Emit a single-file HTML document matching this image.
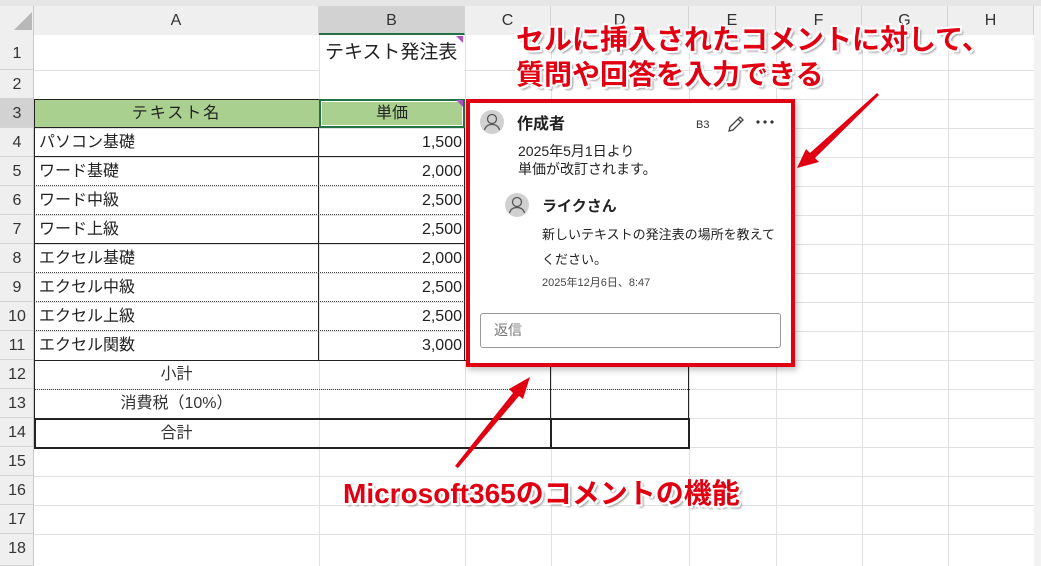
<!DOCTYPE html><html><head><meta charset="utf-8"><style>
body{margin:0;width:1041px;height:566px;overflow:hidden;background:#fff;font-family:"Liberation Sans","Noto Sans CJK JP",sans-serif;position:relative}
.a{position:absolute}
.hl{position:absolute;height:1px;background:#e1e1e1}
.vl{position:absolute;width:1px;background:#e1e1e1}
.ch{position:absolute;top:6px;height:29px;line-height:29px;text-align:center;font-size:16px;color:#333;background:#efefef;border-right:1px solid #d4d4d4;box-sizing:border-box}
.rh{position:absolute;left:0;width:34px;text-align:center;font-size:16px;color:#333;background:#efefef;border-bottom:1px solid #d4d4d4;box-sizing:border-box}
.c{position:absolute;font-size:16px;color:#222;white-space:nowrap;line-height:29px;height:29px}
.red{position:absolute;color:#e00012;font-weight:bold;font-size:28px;line-height:32px;white-space:nowrap;text-shadow:2px 2px 0 #fff,-2px -2px 0 #fff,2px -2px 0 #fff,-2px 2px 0 #fff,3px 3px 2px #999}
</style></head><body>
<div class="a" style="left:0;top:0;width:1041px;height:6px;background:#e6e6e6"></div>
<div class="a" style="left:0;top:6px;width:34px;height:29px;background:#efefef;border-right:1px solid #d4d4d4;box-sizing:border-box"></div>
<svg class="a" style="left:14px;top:12px" width="18" height="20"><polygon points="18,0 18,18 0,18" fill="#b8b8b8"/></svg>
<div class="ch" style="left:34px;width:285px">A</div>
<div class="ch" style="left:319px;width:146px;background:#d2d2d2;border-bottom:2px solid #217346">B</div>
<div class="ch" style="left:465px;width:86px">C</div>
<div class="ch" style="left:551px;width:138px">D</div>
<div class="ch" style="left:689px;width:87px">E</div>
<div class="ch" style="left:776px;width:86px">F</div>
<div class="ch" style="left:862px;width:86px">G</div>
<div class="ch" style="left:948px;width:86px">H</div>
<div class="a" style="left:1034px;top:6px;width:7px;height:560px;background:#f3f3f3"></div>
<div class="rh" style="top:35px;height:35px;line-height:38px">1</div>
<div class="rh" style="top:70px;height:29px;line-height:29px">2</div>
<div class="rh" style="top:99px;height:29px;line-height:29px;background:#d2d2d2">3</div>
<div class="rh" style="top:128px;height:29px;line-height:29px">4</div>
<div class="rh" style="top:157px;height:29px;line-height:29px">5</div>
<div class="rh" style="top:186px;height:29px;line-height:29px">6</div>
<div class="rh" style="top:215px;height:29px;line-height:29px">7</div>
<div class="rh" style="top:244px;height:29px;line-height:29px">8</div>
<div class="rh" style="top:273px;height:29px;line-height:29px">9</div>
<div class="rh" style="top:302px;height:29px;line-height:29px">10</div>
<div class="rh" style="top:331px;height:29px;line-height:29px">11</div>
<div class="rh" style="top:360px;height:29px;line-height:29px">12</div>
<div class="rh" style="top:389px;height:29px;line-height:29px">13</div>
<div class="rh" style="top:418px;height:29px;line-height:29px">14</div>
<div class="rh" style="top:447px;height:29px;line-height:29px">15</div>
<div class="rh" style="top:476px;height:29px;line-height:29px">16</div>
<div class="rh" style="top:505px;height:29px;line-height:29px">17</div>
<div class="rh" style="top:534px;height:32px;line-height:29px">18</div>
<div class="a" style="left:33px;top:6px;width:1px;height:560px;background:#c8c8c8"></div>
<div class="hl" style="left:34px;top:70px;width:1000px"></div>
<div class="hl" style="left:34px;top:99px;width:1000px"></div>
<div class="hl" style="left:34px;top:128px;width:1000px"></div>
<div class="hl" style="left:34px;top:157px;width:1000px"></div>
<div class="hl" style="left:34px;top:186px;width:1000px"></div>
<div class="hl" style="left:34px;top:215px;width:1000px"></div>
<div class="hl" style="left:34px;top:244px;width:1000px"></div>
<div class="hl" style="left:34px;top:273px;width:1000px"></div>
<div class="hl" style="left:34px;top:302px;width:1000px"></div>
<div class="hl" style="left:34px;top:331px;width:1000px"></div>
<div class="hl" style="left:34px;top:360px;width:1000px"></div>
<div class="hl" style="left:34px;top:389px;width:1000px"></div>
<div class="hl" style="left:34px;top:418px;width:1000px"></div>
<div class="hl" style="left:34px;top:447px;width:1000px"></div>
<div class="hl" style="left:34px;top:476px;width:1000px"></div>
<div class="hl" style="left:34px;top:505px;width:1000px"></div>
<div class="hl" style="left:34px;top:534px;width:1000px"></div>
<div class="vl" style="left:319px;top:35px;height:531px"></div>
<div class="vl" style="left:465px;top:35px;height:531px"></div>
<div class="vl" style="left:551px;top:35px;height:531px"></div>
<div class="vl" style="left:689px;top:35px;height:531px"></div>
<div class="vl" style="left:776px;top:35px;height:531px"></div>
<div class="vl" style="left:862px;top:35px;height:531px"></div>
<div class="vl" style="left:948px;top:35px;height:531px"></div>
<div class="a" style="left:320px;top:35px;width:144px;height:63px;background:#fff"></div>
<div class="c" style="left:325px;top:38px;font-size:19px;line-height:30px">テキスト発注表</div>
<div class="a" style="left:34px;top:99px;width:431px;height:29px;background:#a9d08e;border:1px solid #222;box-sizing:border-box"></div>
<div class="a" style="left:319px;top:99px;width:146px;height:29px;border:2px solid #217346;box-sizing:border-box;outline:1px solid #fff;outline-offset:-3px"></div>
<div class="a" style="left:456px;top:100px;width:0;height:0;border-left:7px solid transparent;border-top:7px solid #b04fc8"></div>
<div class="a" style="left:456px;top:36px;width:0;height:0;border-left:7px solid transparent;border-top:7px solid #b04fc8"></div>
<div class="c" style="left:34px;width:285px;text-align:center;top:99px;letter-spacing:2px">テキスト名</div>
<div class="c" style="left:319px;width:146px;text-align:center;top:99px">単価</div>
<div class="a" style="left:34px;top:128px;width:431px;height:233px;border:1px solid #222;border-top:0;box-sizing:border-box"></div>
<div class="a" style="left:318px;top:128px;width:1px;height:233px;background:#222"></div>
<div class="a" style="left:34px;top:156px;width:431px;height:1px;background:#222"></div>
<div class="a" style="left:34px;top:243px;width:431px;height:1px;background:#222"></div>
<div class="a" style="left:34px;top:185px;width:431px;border-top:1px dotted #444"></div>
<div class="a" style="left:34px;top:214px;width:431px;border-top:1px dotted #444"></div>
<div class="a" style="left:34px;top:272px;width:431px;border-top:1px dotted #444"></div>
<div class="a" style="left:34px;top:301px;width:431px;border-top:1px dotted #444"></div>
<div class="a" style="left:34px;top:330px;width:431px;border-top:1px dotted #444"></div>
<div class="c" style="left:39px;top:128px">パソコン基礎</div><div class="c" style="left:320px;width:142px;text-align:right;top:128px">1,500</div>
<div class="c" style="left:39px;top:157px">ワード基礎</div><div class="c" style="left:320px;width:142px;text-align:right;top:157px">2,000</div>
<div class="c" style="left:39px;top:186px">ワード中級</div><div class="c" style="left:320px;width:142px;text-align:right;top:186px">2,500</div>
<div class="c" style="left:39px;top:215px">ワード上級</div><div class="c" style="left:320px;width:142px;text-align:right;top:215px">2,500</div>
<div class="c" style="left:39px;top:244px">エクセル基礎</div><div class="c" style="left:320px;width:142px;text-align:right;top:244px">2,000</div>
<div class="c" style="left:39px;top:273px">エクセル中級</div><div class="c" style="left:320px;width:142px;text-align:right;top:273px">2,500</div>
<div class="c" style="left:39px;top:302px">エクセル上級</div><div class="c" style="left:320px;width:142px;text-align:right;top:302px">2,500</div>
<div class="c" style="left:39px;top:331px">エクセル関数</div><div class="c" style="left:320px;width:142px;text-align:right;top:331px">3,000</div>
<div class="a" style="left:34px;top:360px;width:656px;height:1px;background:#222"></div>
<div class="a" style="left:34px;top:389px;width:656px;border-top:1px dotted #444"></div>
<div class="a" style="left:34px;top:418px;width:656px;height:31px;border:2px solid #222;box-sizing:border-box"></div>
<div class="a" style="left:34px;top:360px;width:1px;height:60px;background:#222"></div>
<div class="a" style="left:550px;top:360px;width:1px;height:60px;background:#222"></div>
<div class="a" style="left:550px;top:418px;width:2px;height:31px;background:#222"></div>
<div class="a" style="left:688px;top:360px;width:1px;height:60px;background:#222"></div>
<div class="c" style="left:34px;width:285px;text-align:center;top:360px;color:#333">小計</div>
<div class="c" style="left:34px;width:285px;text-align:center;top:389px;color:#333">消費税（10%）</div>
<div class="c" style="left:34px;width:285px;text-align:center;top:419px;color:#333">合計</div>
<div class="a" style="left:466px;top:99px;width:329px;height:268px;background:#fff;border:4px solid #e00012;box-sizing:border-box;box-shadow:2px 3px 6px rgba(0,0,0,.25)"></div>
<svg class="a" style="left:480px;top:110px" width="24" height="24"><circle cx="12" cy="12" r="12" fill="#d0d0d0"/><circle cx="12" cy="9" r="4.5" fill="none" stroke="#555" stroke-width="1.3"/><path d="M4.5 20c1-4 4-5.5 7.5-5.5s6.5 1.5 7.5 5.5" fill="none" stroke="#555" stroke-width="1.3"/></svg>
<div class="c" style="left:517px;top:112px;font-size:16px;font-weight:bold;line-height:26px">作成者</div>
<div class="c" style="left:696px;top:112px;font-size:11px;color:#333;line-height:26px">B3</div>
<svg class="a" style="left:726px;top:114px" width="20" height="20"><path d="M3 17l1-4L14 3l3 3L7 16z M12 5l3 3" fill="none" stroke="#444" stroke-width="1.3"/></svg>
<svg class="a" style="left:755px;top:119px" width="20" height="6"><circle cx="3" cy="3" r="1.6" fill="#333"/><circle cx="10" cy="3" r="1.6" fill="#333"/><circle cx="17" cy="3" r="1.6" fill="#333"/></svg>
<div class="c" style="left:518px;top:142px;font-size:14px;line-height:18px;height:auto">2025年5月1日より<br>単価が改訂されます。</div>
<svg class="a" style="left:505px;top:193px" width="24" height="24"><circle cx="12" cy="12" r="12" fill="#d0d0d0"/><circle cx="12" cy="9" r="4.5" fill="none" stroke="#555" stroke-width="1.3"/><path d="M4.5 20c1-4 4-5.5 7.5-5.5s6.5 1.5 7.5 5.5" fill="none" stroke="#555" stroke-width="1.3"/></svg>
<div class="c" style="left:542px;top:194px;font-size:15px;font-weight:bold;line-height:26px">ライクさん</div>
<div class="c" style="left:542px;top:222px;font-size:13px;line-height:25px;height:auto">新しいテキストの発注表の場所を教えて<br>ください。</div>
<div class="c" style="left:542px;top:273px;font-size:11px;color:#444;line-height:20px">2025年12月6日、8:47</div>
<div class="a" style="left:480px;top:313px;width:301px;height:35px;border:1px solid #999;border-radius:3px;box-sizing:border-box;font-size:14px;color:#777;line-height:33px;padding-left:13px">返信</div>
<div class="red" style="left:516px;top:24px">セルに挿入されたコメントに対して、</div>
<div class="red" style="left:516px;top:59px">質問や回答を入力できる</div>
<div class="red" style="left:343px;top:478px">Microsoft365のコメントの機能</div>
<svg class="a" style="left:0;top:0" width="1041" height="566">
<g fill="#e00012">
<path d="M877 93L879 95L815 158L819 162L797 168L806 149L810 153Z"/>
<path d="M458 468L455 466L513 393L509 389L530 377L523 399L519 396Z"/>
</g></svg>
</body></html>
